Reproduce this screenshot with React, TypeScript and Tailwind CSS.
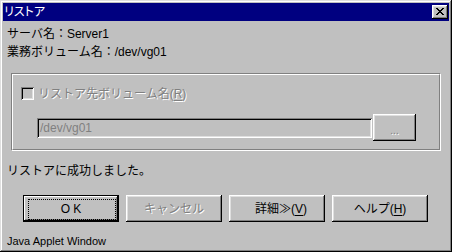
import React from "react";

const raised =
  "shadow-[inset_-1px_-1px_#000,inset_1px_1px_#fff,inset_-2px_-2px_#808080,inset_2px_2px_#dfdfdf]";

function Btn({
  children,
  disabled,
  def,
}: {
  children: React.ReactNode;
  disabled?: boolean;
  def?: boolean;
}) {
  if (def) {
    return (
      <div className="relative w-[96px] h-[27px] border border-black flex items-center justify-center">
        <div className="absolute inset-0 shadow-[inset_-1px_-1px_#000,inset_1px_1px_#fff,inset_-2px_-2px_#808080]" />
        <div className="absolute left-[4px] top-[3px] right-[2px] bottom-[1px] border border-dotted border-black" />
        <span className="relative tracking-[3px] pl-[3px]">{children}</span>
      </div>
    );
  }
  return (
    <div
      className={`w-[96px] h-[27px] flex items-center justify-center ${raised} ${
        disabled ? "text-[#808080] [text-shadow:1px_1px_0_#fff]" : ""
      }`}
    >
      {children}
    </div>
  );
}

const U = ({ c }: { c: string }) => <span className="underline underline-offset-2">{c}</span>;

export default function App() {
  return (
    <div className="w-[452px] h-[252px] bg-[#c0c0c0] p-[3px] flex flex-col text-[12px] leading-[18px] text-black font-['Liberation_Sans','Noto_Sans_CJK_JP',sans-serif] shadow-[inset_-1px_-1px_#000,inset_1px_1px_#dfdfdf,inset_-2px_-2px_#808080,inset_2px_2px_#fff] overflow-hidden">
      {/* title bar */}
      <div className="h-[18px] bg-[#000080] flex items-center justify-between pl-[1px] pr-[1px] shrink-0">
        <span className="text-white leading-[18px] [font-feature-settings:'palt']">リストア</span>
        <div className={`w-[16px] h-[14px] bg-[#c0c0c0] flex items-center justify-center ${raised}`}>
          <svg width="8" height="7" viewBox="0 0 8 7" className="-mt-[1px]">
            <path d="M0 0h2v1h1v1h2V1h1V0h2v1H7v1H6v1H5v1h1v1h1v1h1v1H6V6H5V5H3v1H2v1H0V6h1V5h1V4h1V3H2V2H1V1H0z" fill="#000" />
          </svg>
        </div>
      </div>

      <div className="pl-[4px] mt-[4px] h-[18px]">サーバ名：Server1</div>
      <div className="pl-[4px] h-[18px]">業務ボリューム名：/dev/vg01</div>

      {/* group box */}
      <div className="ml-[8px] mt-[12px] w-[430px] h-[78px] border border-t-[#808080] border-l-[#808080] border-b-white border-r-white">
        <div className="w-full h-full border border-t-white border-l-white border-b-[#808080] border-r-[#808080] flex flex-col">
          <div className="ml-[8px] mt-[12px] h-[13px] flex items-center">
            <div className="w-[13px] h-[13px] bg-[#c0c0c0] shadow-[inset_1px_1px_#808080,inset_-1px_-1px_#fff,inset_2px_2px_#000,inset_-2px_-2px_#dfdfdf]" />
            <span className="ml-[4px] text-[#808080] [text-shadow:1px_1px_0_#fff]">
              リストア先ボリューム名(<U c="R" />)
            </span>
          </div>
          <div className="ml-[24px] mt-[14px] flex items-center h-[27px]">
            <div className="w-[335px] h-[20px] bg-[#c0c0c0] shadow-[inset_1px_1px_#808080,inset_-1px_-1px_#fff,inset_2px_2px_#000,inset_-2px_-2px_#dfdfdf] flex items-center pl-[3px] text-[#808080]">
              /dev/vg01
            </div>
            <div className={`w-[43px] h-[27px] ml-[1px] flex items-center justify-center text-[#808080] [text-shadow:1px_1px_0_#fff] ${raised}`}>
              <span className="pt-[6px] text-[10px]">...</span>
            </div>
          </div>
        </div>
      </div>

      <div className="pl-[4px] mt-[11px] h-[18px]">リストアに成功しました。</div>

      <div className="pl-[20px] mt-[15px] flex gap-[7px]">
        <Btn def>OK</Btn>
        <Btn disabled>キャンセル</Btn>
        <Btn>
          <span className="pl-[8px]">詳細≫(<U c="V" />)</span>
        </Btn>
        <Btn>
          ヘルプ(<U c="H" />)
        </Btn>
      </div>

      <div className="pl-[4px] mt-[11px] h-[16px] leading-[16px] text-[11px]">Java Applet Window</div>
    </div>
  );
}
